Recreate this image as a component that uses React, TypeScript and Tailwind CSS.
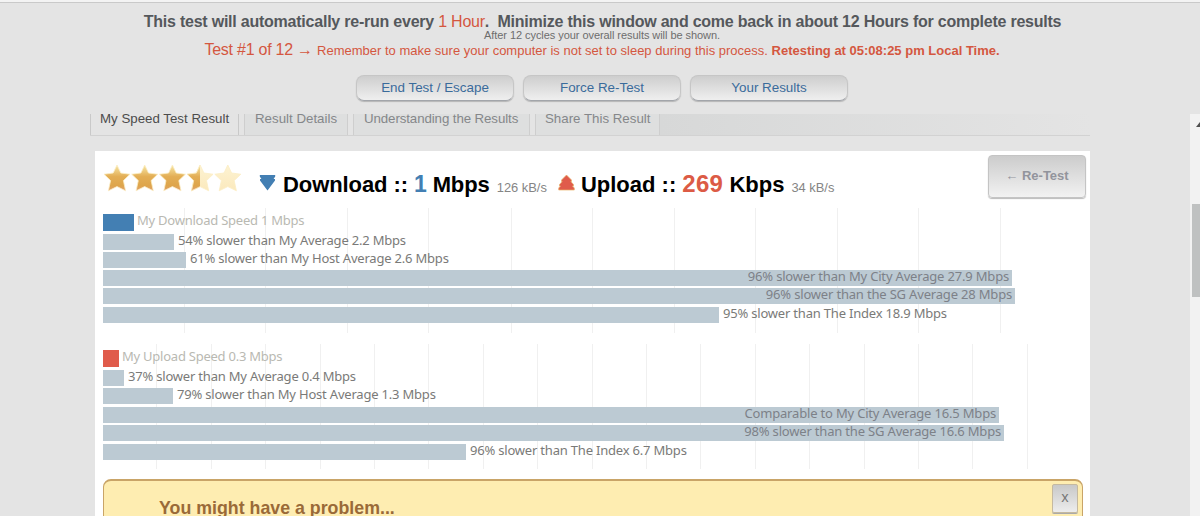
interface Bar {
  label: string
  width: number
  offset: number
  kind?: 'download' | 'upload'
  inside?: boolean
}

interface BarChartProps {
  bars: Bar[]
  lines: number[]
}

const downloadBars: Bar[] = [
  { label: 'My Download Speed 1 Mbps', width: 31, offset: 6, kind: 'download' },
  { label: '54% slower than My Average 2.2 Mbps', width: 71, offset: 3 },
  { label: '61% slower than My Host Average 2.6 Mbps', width: 83, offset: 2 },
  { label: '96% slower than My City Average 27.9 Mbps', width: 909, offset: 2, inside: true },
  { label: '96% slower than the SG Average 28 Mbps', width: 912, offset: 2, inside: true },
  { label: '95% slower than The Index 18.9 Mbps', width: 616, offset: 3 },
]

const uploadBars: Bar[] = [
  { label: 'My Upload Speed 0.3 Mbps', width: 16, offset: 6, kind: 'upload' },
  { label: '37% slower than My Average 0.4 Mbps', width: 21, offset: 3 },
  { label: '79% slower than My Host Average 1.3 Mbps', width: 70, offset: 2 },
  { label: 'Comparable to My City Average 16.5 Mbps', width: 896, offset: 3, inside: true },
  { label: '98% slower than the SG Average 16.6 Mbps', width: 901, offset: 2, inside: true },
  { label: '96% slower than The Index 6.7 Mbps', width: 363, offset: 3 },
]

const downloadLines = [81, 162, 244, 325, 408, 489, 571, 652, 734, 815, 897]
const uploadLines = [53, 108, 162, 217, 271, 325, 380, 434, 489, 543, 597, 652, 706, 761, 815, 869, 924]

const starPath =
  'M14 1 L17.8 9 L27 10.2 L20.4 16.6 L22.6 26.8 L14 22.6 L5.4 26.8 L7.6 16.6 L1 10.2 L10.2 9 Z'

function BarChart({ bars, lines }: BarChartProps) {
  return (
    <div className="relative h-[125px] w-[980px]">
      {/* Grid lines */}
      {lines.map((x) => (
        <div key={x} className="absolute top-0 h-full w-px bg-[#f0f0f0]" style={{ left: x }} />
      ))}

      <div className="relative flex flex-col">
        {bars.map((bar) => (
          <div key={bar.label} className="flex items-start" style={{ paddingTop: bar.offset }}>
            <div
              className={`flex shrink-0 justify-end ${
                bar.kind === 'download'
                  ? 'h-[17px] bg-[#437fb3]'
                  : bar.kind === 'upload'
                    ? 'h-[17px] bg-[#e05b4b]'
                    : 'h-4 bg-[#bccad3]'
              }`}
              style={{ width: bar.width }}
            >
              {bar.inside && (
                <span className="-mt-0.5 pr-[3px] text-[13px] leading-4 tracking-[-0.18px] whitespace-nowrap text-[#7d8188]">
                  {bar.label}
                </span>
              )}
            </div>
            {!bar.inside && (
              <span
                className={`-mt-0.5 text-[13px] leading-4 whitespace-nowrap ${
                  bar.kind ? 'pl-[3px] tracking-[-0.24px] text-[#b9b9b2]' : 'pl-1 tracking-[-0.2px] text-[#7a7a78]'
                }`}
              >
                {bar.label}
              </span>
            )}
          </div>
        ))}
      </div>
    </div>
  )
}

function Stars() {
  return (
    <svg className="shrink-0" width="139" height="28" viewBox="0 0 139 28">
      <defs>
        <linearGradient id="gold" x1="0" y1="0" x2="0" y2="1">
          <stop offset="0" stopColor="#f7e8a8" />
          <stop offset="0.45" stopColor="#e3ae55" />
          <stop offset="0.8" stopColor="#dea54b" />
          <stop offset="1" stopColor="#e0a070" />
        </linearGradient>
        <linearGradient id="pale" x1="0" y1="0" x2="0" y2="1">
          <stop offset="0" stopColor="#fdf3d2" />
          <stop offset="1" stopColor="#fbe9bd" />
        </linearGradient>
        <clipPath id="half">
          <rect x="0" y="0" width="14" height="28" />
        </clipPath>
      </defs>
      {[0, 1, 2, 3, 4].map((i) => (
        <g key={i} transform={`translate(${i * 27.7})`} stroke="#fbeec4" strokeWidth="0.8">
          <path d={starPath} fill={i < 3 ? 'url(#gold)' : 'url(#pale)'} />
          {i === 3 && <path d={starPath} fill="url(#gold)" clipPath="url(#half)" />}
        </g>
      ))}
    </svg>
  )
}

function PillButton({ label }: { label: string }) {
  return (
    <button className="h-[26px] w-[158px] rounded-lg border border-[#c6c6c6] border-b-[#a2a5aa] bg-linear-to-b from-[#cecece] to-[#efefef] text-[13.4px] leading-5 text-[#3a6b9b] shadow-[0_1px_1px_#b5b5b5]">
      {label}
    </button>
  )
}

function App() {
  return (
    <div className="flex h-[516px] w-[1200px] flex-col overflow-hidden bg-[#e4e4e4] font-['Liberation_Sans',Arial,sans-serif]">
      {/* Auto re-run notice */}
      <div className="flex h-[114px] shrink-0 flex-col items-center border-t-2 border-[#f3f3f3]">
        <div className="h-px w-full shrink-0 bg-[#c9c9c9]" />
        <div className="mt-[9px] h-[17px] pl-[5px] text-[16px] leading-5 font-bold tracking-[-0.23px] whitespace-pre text-[#55585c]">
          This test will automatically re-run every <span className="font-normal text-[#d4573f]">1 Hour</span>.{'  '}Minimize
          this window and come back in about 12 Hours for complete results
        </div>
        <div className="h-3 pl-1 text-[11px] leading-3 tracking-[-0.06px] whitespace-nowrap text-[#6d6d6d]">
          After 12 cycles your overall results will be shown.
        </div>
        <div className="h-[18px] pl-1 text-[13px] leading-[18px] whitespace-nowrap text-[#d4573f]">
          <span className="text-[16px] tracking-[-0.24px]">Test #1 of 12 → </span>Remember to make sure your computer is not
          set to sleep during this process. <b>Retesting at 05:08:25 pm Local Time.</b>
        </div>
        <div className="mt-4 flex gap-[9px] pl-1">
          <PillButton label="End Test / Escape" />
          <PillButton label="Force Re-Test" />
          <PillButton label="Your Results" />
        </div>
      </div>

      <div className="flex flex-1">
        <div className="flex w-[1190px] flex-col">
          {/* Tabs, scrolled partly under the notice */}
          <div className="ml-[90px] flex h-[22px] w-[1000px] overflow-hidden border-b border-[#d2d2d2] text-[13.3px] text-[#85878a]">
            <div className="-mt-1 h-7 w-[149px] border-x border-[#c9c9c9] pl-[9px] leading-[17px] whitespace-nowrap text-[#4c4c4c]">
              My Speed Test Result
            </div>
            <div className="-mt-1 ml-[5px] h-7 w-[104px] border-x border-[#cecece] bg-[#dedfdf] pl-[10px] leading-[17px] whitespace-nowrap">
              Result Details
            </div>
            <div className="-mt-1 ml-[5px] h-7 w-[177px] border-x border-[#cecece] bg-[#dedfdf] pl-[10px] leading-[17px] tracking-[-0.1px] whitespace-nowrap">
              Understanding the Results
            </div>
            <div className="-mt-1 ml-[5px] h-7 w-[125px] border-x border-[#cecece] bg-[#dedfdf] pl-[9px] leading-[17px] whitespace-nowrap">
              Share This Result
            </div>
            <div className="flex-1 bg-linear-to-r from-[#d7d8d8] to-[#e4e4e4]" />
          </div>

          {/* Result panel */}
          <div className="mt-[15px] ml-[95px] flex h-[365px] w-[995px] flex-col bg-white pl-2">
            <div className="flex h-[57px] shrink-0 pt-[13px]">
              <Stars />
              <svg className="mt-[10px] ml-[17px] shrink-0" width="17" height="18" viewBox="0 0 17 18">
                <path d="M.8 1H16.2V2.5L14.6 5H16V6.5L8.5 16.5L1 6.5V5H2.4L.8 2.5Z" fill="#437fb3" />
              </svg>
              <div className="mt-[7px] ml-[7px] text-[22px] leading-7 font-bold tracking-[-0.09px] whitespace-pre text-black">
                Download :: <span className="text-[23px] leading-none text-[#437fb3]">1</span> Mbps
                <span className="pl-[7px] text-[12.9px] font-normal tracking-normal text-[#858585]">126 kB/s</span>
              </div>
              <svg className="mt-[10px] ml-[11px] shrink-0" width="17" height="18" viewBox="0 0 17 18">
                <path
                  d="M8.5 1L13.5 6V7.5H12.8L15.5 10.5V12H14.5L16.3 14V16H.7V14L2.5 12H1.5V10.5L4.2 7.5H3.5V6Z"
                  fill="#e05b4b"
                  stroke="#e9b46c"
                  strokeWidth=".7"
                />
              </svg>
              <div className="mt-[7px] ml-[6px] text-[22px] leading-7 font-bold whitespace-pre text-black">
                Upload :: <span className="text-[24px] leading-none tracking-[0.3px] text-[#dc5b45]">269</span> Kbps
                <span className="pl-[7px] text-[12.9px] font-normal text-[#858585]">34 kB/s</span>
              </div>
              <button className="-mt-[9px] mr-[4px] ml-auto h-[43px] w-[98px] rounded-sm border border-[#c4c4c4] bg-linear-to-b from-[#cccccc] to-[#f2f2f2] pb-0.5 text-[13px] font-bold text-[#92949c] shadow-[0_1px_1px_#bbb]">
                ← Re-Test
              </button>
            </div>

            <div className="flex flex-col gap-[11px] font-['Noto_Sans','Open_Sans',sans-serif]">
              <BarChart bars={downloadBars} lines={downloadLines} />
              <BarChart bars={uploadBars} lines={uploadLines} />
            </div>

            {/* Problem alert */}
            <div className="mt-[10px] flex h-[60px] w-[980px] shrink-0 justify-between rounded-lg border border-t-2 border-[#c9a467] bg-[#feedb1] pt-[3px] pr-1 pl-[55px]">
              <h2 className="mt-3 text-[17.8px] leading-6 font-bold text-[#9a6a38]">You might have a problem...</h2>
              <button className="h-[29px] w-[26px] rounded-xs border border-[#c5b9a0] bg-linear-to-b from-[#c8c8c8] to-[#ededed] pb-1 font-['Noto_Sans',sans-serif] text-[14px] leading-5 text-[#777] shadow-[0_1px_0_#aaa]">
                x
              </button>
            </div>
          </div>
        </div>

        {/* Scrollbar */}
        <div className="flex h-[402px] w-[10px] flex-col bg-[#f2f2f2]">
          <svg className="mt-2 ml-1.5" width="4" height="5" viewBox="0 0 4 5">
            <path d="M0 5L4 0V5Z" fill="#505050" />
          </svg>
          <div className="mt-[77px] ml-0.5 h-[93px] w-2 bg-[#bfc1c1]" />
        </div>
      </div>
    </div>
  )
}

export default App
